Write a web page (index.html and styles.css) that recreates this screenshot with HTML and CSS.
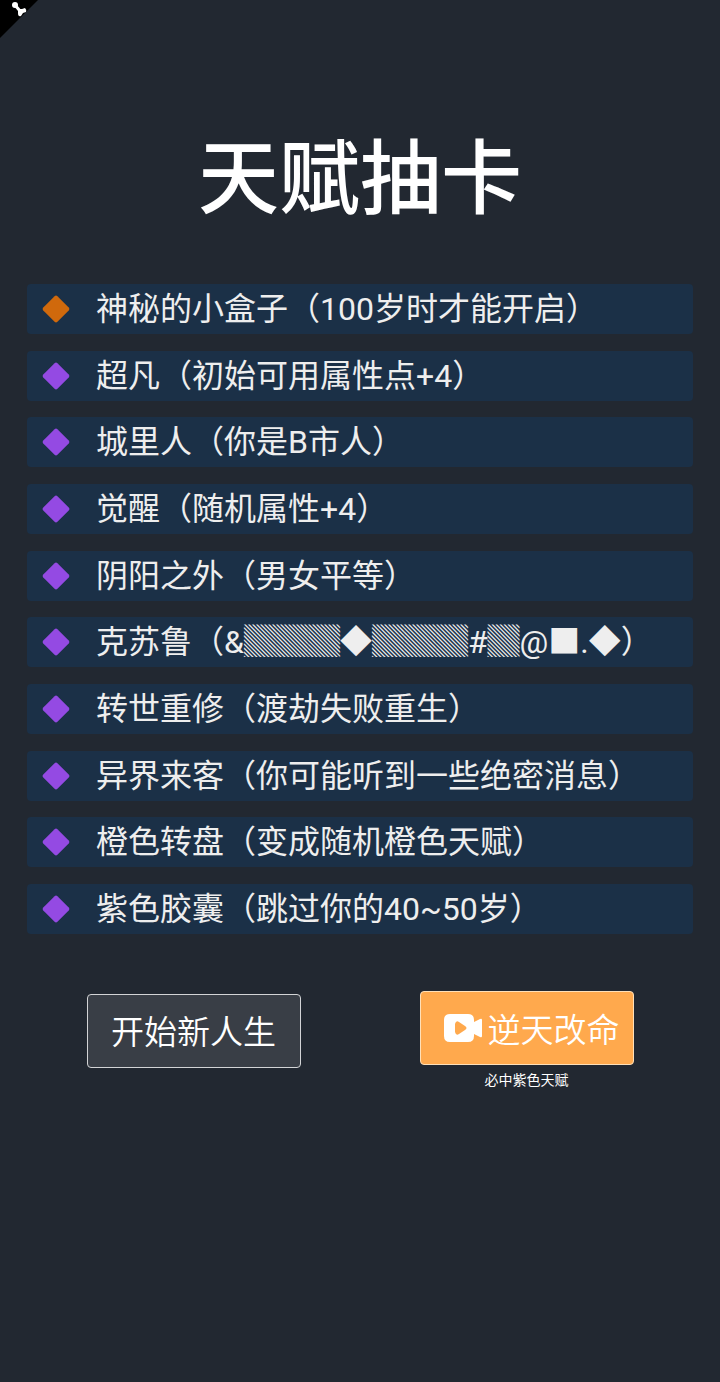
FILE: index.html
```html
<!DOCTYPE html>
<html lang="zh-CN">
<head>
<meta charset="utf-8">
<meta name="viewport" content="width=device-width, initial-scale=1">
<title>天赋抽卡</title>
<link rel="stylesheet" href="styles.css">
</head>
<body>
<svg class="corner" viewBox="0 0 40 40" aria-hidden="true">
  <path d="M0 0H38L0 38Z" fill="#000"/>
  <path d="M15 5L20 11" stroke="#fff" stroke-width="3"/>
  <circle cx="15" cy="5" r="3" fill="#fff"/>
  <path d="M18 9L22 9L25 8Q27 10 26 12L23 13L21 16Q18 17 18 13Z" fill="#fff"/>
</svg>
<main class="page">
  <h1 class="title">天赋抽卡</h1>
  <ul class="talents">
    <li class="talent talent-orange">神秘的小盒子（100岁时才能开启）</li>
    <li class="talent">超凡（初始可用属性点+4）</li>
    <li class="talent">城里人（你是B市人）</li>
    <li class="talent">觉醒（随机属性+4）</li>
    <li class="talent">阴阳之外（男女平等）</li>
    <li class="talent">克苏鲁（&amp;▓▓▓◆▓▓▓#▓@■.◆）</li>
    <li class="talent">转世重修（渡劫失败重生）</li>
    <li class="talent">异界来客（你可能听到一些绝密消息）</li>
    <li class="talent">橙色转盘（变成随机橙色天赋）</li>
    <li class="talent">紫色胶囊（跳过你的40~50岁）</li>
  </ul>
  <div class="actions">
    <button class="button button-start" type="button">开始新人生</button>
    <div class="reroll">
      <button class="button button-video" type="button" aria-describedby="hint">
        <svg class="camera" viewBox="0 0 40 30" aria-hidden="true">
          <path fill="#fff" fill-rule="evenodd" d="M7 1H25Q31 1 31 7V9L37 6Q39 5 39 7V23Q39 25 37 24L31 21V23Q31 29 25 29H7Q1 29 1 23V7Q1 1 7 1ZM12 11V19Q13 23 16 21L22 17Q25 15 22 13L16 9Q13 7 12 11Z"/>
        </svg>
        <span>逆天改命</span>
      </button>
      <p class="hint" id="hint">必中紫色天赋</p>
    </div>
  </div>
</main>
</body>
</html>
```
FILE: styles.css
```css
* {
  box-sizing: border-box;
}

body {
  margin: 0;
  min-height: 100vh;
  background: #222831;
  color: #eeeeee;
  font-family: Roboto, "Noto Sans CJK SC", sans-serif;
}

.corner {
  position: absolute;
  top: 0;
  left: 0;
  width: 40px;
  height: 40px;
}

.page {
  padding: 120px 27px 40px;
}

.title {
  margin: 0;
  color: #ffffff;
  font-size: 81px;
  font-weight: 500;
  line-height: 120px;
  text-align: center;
}

.talents {
  display: grid;
  align-content: space-between;
  min-height: 650px;
  margin: 44px 0 0;
  padding: 0;
  list-style: none;
}

.talent {
  display: flex;
  align-items: center;
  gap: 30px;
  padding: 0 19px;
  border-radius: 4px;
  background: #1b3047;
  font-size: 32px;
  line-height: 50px;
}

.talent::before {
  content: "";
  flex: none;
  width: 20px;
  height: 20px;
  border-radius: 2px;
  background: #944ae3;
  transform: rotate(45deg);
}

.talent-orange::before {
  background: #d0690c;
}

.actions {
  display: grid;
  grid-template-columns: 1fr 1fr;
  justify-items: center;
  align-items: start;
  margin-top: 57px;
}

.button {
  display: flex;
  align-items: center;
  justify-content: center;
  gap: 5px;
  width: 214px;
  height: 74px;
  padding: 0 0 3px;
  border: 1px solid #d3d4d6;
  border-radius: 4px;
  color: #ffffff;
  font-family: "Noto Sans CJK SC", sans-serif;
  font-size: 33px;
  font-weight: 350;
}

.button-start {
  margin-top: 3px;
  background: #393e46;
}

.button-video {
  padding: 0 0 1px 9px;
  border-color: #ffe0b8;
  background: #ffa94d;
}

.camera {
  width: 40px;
  height: 30px;
}

.hint {
  margin: 4px 0 0;
  color: #ffffff;
  font-size: 14px;
  line-height: 22px;
  text-align: center;
}
```
